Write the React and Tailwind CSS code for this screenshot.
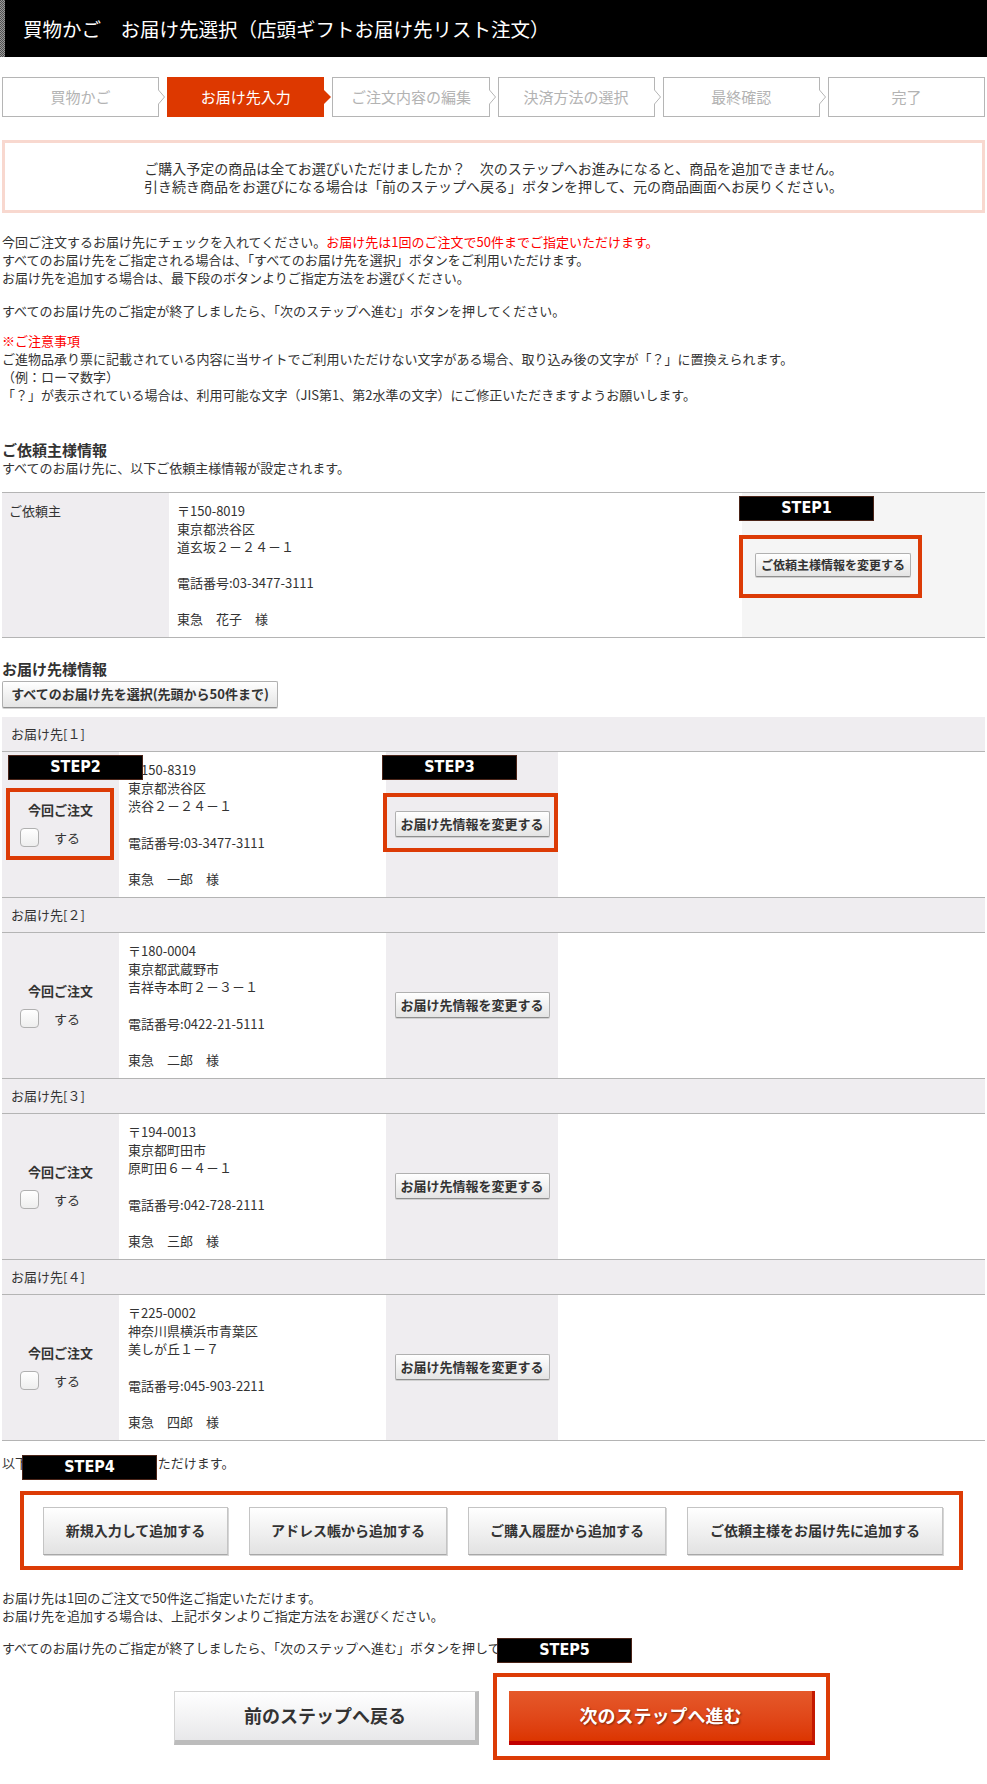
import React from 'react';

const steps = ['買物かご', 'お届け先入力', 'ご注文内容の編集', '決済方法の選択', '最終確認', '完了'];

const recipients = [
  { no: '１', zip: '〒150-8319', city: '東京都渋谷区', street: '渋谷２－２４－１', tel: '03-3477-3111', name: '東急　一郎　様' },
  { no: '２', zip: '〒180-0004', city: '東京都武蔵野市', street: '吉祥寺本町２－３－１', tel: '0422-21-5111', name: '東急　二郎　様' },
  { no: '３', zip: '〒194-0013', city: '東京都町田市', street: '原町田６－４－１', tel: '042-728-2111', name: '東急　三郎　様' },
  { no: '４', zip: '〒225-0002', city: '神奈川県横浜市青葉区', street: '美しが丘１－７', tel: '045-903-2211', name: '東急　四郎　様' },
];

const addButtons = [
  { label: '新規入力して追加する', w: 'w-[185px]' },
  { label: 'アドレス帳から追加する', w: 'w-[198px]' },
  { label: 'ご購入履歴から追加する', w: 'w-[198px]' },
  { label: 'ご依頼主様をお届け先に追加する', w: 'w-[256px]' },
];

// black "STEPn" annotation tag laid over the page
const StepTag = ({ label, className }) => (
  <div
    className={`absolute flex h-[25px] w-[135px] items-center justify-center border border-[#4a2418] bg-black font-['DejaVu_Sans_Condensed',sans-serif] text-[16px] font-bold text-white ${className}`}
  >
    {label}
  </div>
);

const SmallButton = ({ children, className = '' }) => (
  <button
    className={`rounded-[2px] border border-[#b0b0b0] border-b-[#8f8f8f] bg-gradient-to-b from-white to-[#e4e4e4] font-bold text-[#333] shadow-[0_1px_0_#d0d0d0] ${className}`}
  >
    {children}
  </button>
);

const Chevron = ({ active }) =>
  active ? (
    <svg className="absolute -right-[7px] top-1/2 -translate-y-1/2" width="7" height="14" viewBox="0 0 7 14">
      <polygon points="0,0 7,7 0,14" fill="#dd3800" />
    </svg>
  ) : (
    <svg className="absolute -right-[7px] top-1/2 -translate-y-1/2" width="7" height="14" viewBox="0 0 7 14">
      <rect x="0" y="0" width="1" height="14" fill="#fff" />
      <polygon points="0,0 6.5,7 0,14" fill="#fff" />
      <polyline points="0.5,0 6.5,7 0.5,14" fill="none" stroke="#b5b5b5" strokeWidth="1" />
    </svg>
  );

const App = () => {
  return (
    <div className="min-h-[1784px] w-[987px] bg-white font-['Noto_Sans_CJK_JP',sans-serif] text-[#333]">
      {/* title bar */}
      <div className="flex h-[57px] items-center bg-black">
        <div className="h-full w-[5px] bg-[repeating-conic-gradient(#9a9a9a_0_25%,#505050_0_50%)] bg-[length:2px_2px]" />
        <h1 className="ml-[18px] text-[19.5px] font-normal leading-none text-white">
          買物かご　お届け先選択（店頭ギフトお届け先リスト注文）
        </h1>
      </div>

      <div className="px-[2px]">
        {/* progress steps */}
        <div className="mt-5 grid grid-cols-6 gap-2">
          {steps.map((s, i) => (
            <div
              key={s}
              className={`relative flex h-10 items-center justify-center text-[15px] ${
                i === 1 ? 'bg-[#dd3800] text-white' : 'border border-[#b5b5b5] bg-white text-[#b3b3b3]'
              }`}
            >
              {s}
              {i < 5 && <Chevron active={i === 1} />}
            </div>
          ))}
        </div>

        {/* notice */}
        <div className="mt-[23px] flex h-[73px] flex-col items-center justify-center border-[3px] border-[#f8d8cf] text-[14px] leading-[18px]">
          <p>ご購入予定の商品は全てお選びいただけましたか？　次のステップへお進みになると、商品を追加できません。</p>
          <p>引き続き商品をお選びになる場合は「前のステップへ戻る」ボタンを押して、元の商品画面へお戻りください。</p>
        </div>

        {/* instructions */}
        <div className="mt-5 text-[13px] leading-[18.2px]">
          <p>
            今回ご注文するお届け先にチェックを入れてください。
            <span className="text-[#ff0000]">お届け先は1回のご注文で50件までご指定いただけます。</span>
            <br />
            すべてのお届け先をご指定される場合は、「すべてのお届け先を選択」ボタンをご利用いただけます。
            <br />
            お届け先を追加する場合は、最下段のボタンよりご指定方法をお選びください。
          </p>
          <p className="mt-[14px]">すべてのお届け先のご指定が終了しましたら、「次のステップへ進む」ボタンを押してください。</p>
          <p className="mt-[12px]">
            <span className="text-[#ff0000]">※ご注意事項</span>
            <br />
            ご進物品承り票に記載されている内容に当サイトでご利用いただけない文字がある場合、取り込み後の文字が「？」に置換えられます。
            <br />
            （例：ローマ数字）
            <br />
            「？」が表示されている場合は、利用可能な文字（JIS第1、第2水準の文字）にご修正いただきますようお願いします。
          </p>
        </div>

        {/* sender */}
        <h2 className="mt-[35px] text-[15px] font-bold leading-[19px]">ご依頼主様情報</h2>
        <p className="text-[13px] leading-[18px]">すべてのお届け先に、以下ご依頼主様情報が設定されます。</p>

        <div className="mt-[15px] flex border-y border-[#b4b4b4] text-[13px] leading-[18px]">
          <div className="w-[167px] bg-[#efedf0] px-[7px] py-[9px]">ご依頼主</div>
          <div className="w-[573px] bg-white px-2 py-[9px]">
            <p>〒150-8019</p>
            <p>東京都渋谷区</p>
            <p>道玄坂２－２４－１</p>
            <p>&nbsp;</p>
            <p>電話番号:03-3477-3111</p>
            <p>&nbsp;</p>
            <p>東急　花子　様</p>
          </div>
          <div className="relative flex-1 bg-[#f5f5f5] pl-[13px] pt-[60px]">
            <SmallButton className="h-[24px] w-[156px] text-[12px]">ご依頼主様情報を変更する</SmallButton>
            <StepTag label="STEP1" className="-left-[3px] top-[3px]" />
            <div className="absolute -left-[3px] top-[42px] h-[63px] w-[183px] border-4 border-[#dc3b06]" />
          </div>
        </div>

        {/* recipients */}
        <h2 className="mt-[21px] text-[15px] font-bold leading-[19px]">お届け先様情報</h2>
        <SmallButton className="mt-[3px] h-[27px] w-[276px] text-[13px]">すべてのお届け先を選択(先頭から50件まで)</SmallButton>

        <div className="mt-[9px] text-[13px]">
          {recipients.map((r, idx) => (
            <div key={r.no}>
              <div className="flex h-[35px] items-center border-b border-[#b4b4b4] bg-[#efedf0] px-[9px]">
                お届け先[{r.no}]
              </div>
              <div className="relative flex h-[146px] border-b border-[#b4b4b4]">
                <div className="flex w-[117px] flex-col justify-center bg-[#efedf0]">
                  <p className="text-center font-bold leading-[18px]">今回ご注文</p>
                  <label className="mt-[9px] flex items-center pl-[18px]">
                    <span className="h-[19px] w-[19px] rounded-[4px] border border-[#b0b0b0] bg-gradient-to-b from-white to-[#eeeeee]" />
                    <span className="ml-[15px] leading-[18px]">する</span>
                  </label>
                </div>
                <div className="w-[267px] bg-white py-[9px] pl-[9px] leading-[18.3px]">
                  <p>{r.zip}</p>
                  <p>{r.city}</p>
                  <p>{r.street}</p>
                  <p>&nbsp;</p>
                  <p>電話番号:{r.tel}</p>
                  <p>&nbsp;</p>
                  <p>{r.name}</p>
                </div>
                <div className="flex w-[172px] items-center justify-center bg-[#efedf0]">
                  <SmallButton className="h-[26px] w-[155px] text-[13px]">お届け先情報を変更する</SmallButton>
                </div>
                <div className="flex-1 bg-white" />

                {idx === 0 && (
                  <>
                    <StepTag label="STEP2" className="left-[6px] top-[3px]" />
                    <div className="absolute left-[4px] top-[36px] h-[72px] w-[108px] border-4 border-[#dc3b06]" />
                    <StepTag label="STEP3" className="left-[380px] top-[3px]" />
                    <div className="absolute left-[381px] top-[41px] h-[59px] w-[175px] border-4 border-[#dc3b06]" />
                  </>
                )}
              </div>
            </div>
          ))}
        </div>

        {/* add buttons */}
        <div className="relative mt-[13px] text-[13px] leading-[18px]">
          <p>以下よりお届け先を追加いただけます。</p>
          <StepTag label="STEP4" className="left-[20px] top-[1px]" />
        </div>

        <div className="ml-[18px] mt-[19px] flex w-[943px] gap-[21px] border-4 border-[#dc3b06] pb-[11px] pl-[19px] pt-[12px]">
          {addButtons.map((b) => (
            <button
              key={b.label}
              className={`h-[48px] ${b.w} border border-[#c4c4c4] border-b-[#a8a8a8] bg-gradient-to-b from-white to-[#e2e2e2] text-[14px] font-bold text-[#333] shadow-[1px_1px_0_#d6d6d6]`}
            >
              {b.label}
            </button>
          ))}
        </div>

        <div className="mt-[19px] text-[13px] leading-[18px]">
          <p>お届け先は1回のご注文で50件迄ご指定いただけます。</p>
          <p>お届け先を追加する場合は、上記ボタンよりご指定方法をお選びください。</p>
          <div className="relative mt-[14px]">
            <p>すべてのお届け先のご指定が終了しましたら、「次のステップへ進む」ボタンを押してください。</p>
            <StepTag label="STEP5" className="left-[495px] -top-[1px]" />
          </div>
        </div>

        {/* navigation */}
        <div className="mt-[16px] flex items-start pb-[20px] pl-[172px]">
          <button className="mt-[18px] h-[54px] w-[305px] border-l border-t border-[#d4d4d4] border-b-[5px] border-r-[4px] border-b-[#bcbcbc] border-r-[#bcbcbc] bg-gradient-to-b from-white to-[#e8e8ea] text-[18px] font-bold text-[#333]">
            前のステップへ戻る
          </button>
          <div className="ml-[14px] w-[337px] border-4 border-[#dc3b06] pb-[11px] pl-[12px] pt-[14px]">
            <button className="h-[54px] w-[306px] border-b-[4px] border-r-[3px] border-b-[#c10000] border-r-[#c41a00] bg-gradient-to-b from-[#e5592a] to-[#dc3500] text-[18px] font-bold text-white [text-shadow:1px_1px_2px_rgba(0,0,0,0.45)]">
              次のステップへ進む
            </button>
          </div>
        </div>
      </div>
    </div>
  );
};

export default App;
